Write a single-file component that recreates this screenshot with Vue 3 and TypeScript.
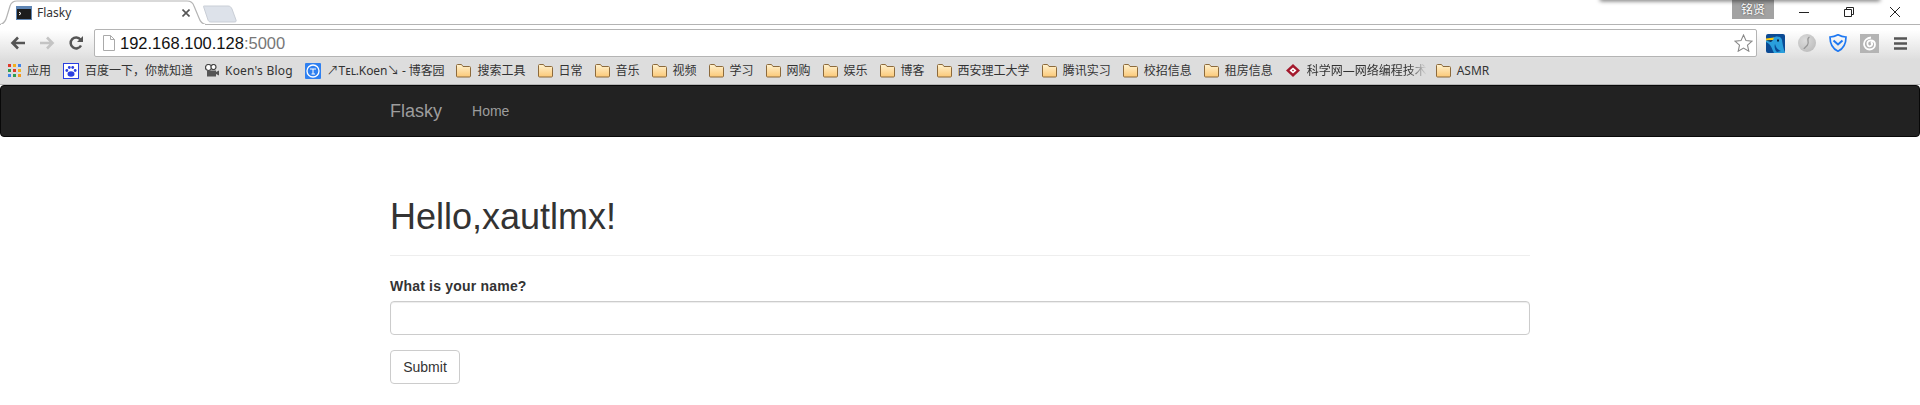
<script setup lang="ts">
const folders = ['搜索工具','日常','音乐','视频','学习','网购','娱乐','博客','西安理工大学','腾讯实习','校招信息','租房信息']
</script>

<template>
  <div class="page">
    <header class="chrome">
      <div class="strip">
        <div class="tab">
          <svg class="tab-shape" width="206" height="25" viewBox="0 0 206 25">
            <path d="M0 24.500C4 24 6 20 7 16L10 6C11 3 13 1 17 1H187C191 1 193 3 194 6L199 18C200 21 202 24 206 24.500Z" fill="#fff" stroke="#b4b4b4" stroke-width="1.200"/>
            <path d="M1 25H205" stroke="#fff" stroke-width="2"/>
          </svg>
          <svg class="favicon" width="16" height="14" viewBox="0 0 16 14">
            <rect width="16" height="14" fill="#5f86b5"/>
            <rect x="1" y="3" width="14" height="10" fill="#1c1c1c"/>
            <path d="M3 6l2 1.500-2 1.500" stroke="#fff" fill="none"/>
          </svg>
          <span class="tab-title">Flasky</span>
          <svg class="tab-close" width="8" height="8" viewBox="0 0 8 8"><path d="M.5.5l7 7M7.500.5l-7 7" stroke="#555" stroke-width="1.600"/></svg>
        </div>
        <svg class="newtab" width="34" height="18" viewBox="0 0 34 18">
          <path d="M1 1H25C27 1 28 2 29 4L33 15C33.500 16.500 33 17 31 17H8C6 17 5.500 16 5 15L1 3C.6 1.500 0 1 1 1Z" fill="#dde2ea" stroke="#c9ced6"/>
        </svg>
        <div class="controls">
          <span class="user">铭贤</span>
          <svg class="ctl ctl-min" width="10" height="10" viewBox="0 0 10 10"><path d="M0 5.500H10" stroke="#222"/></svg>
          <svg class="ctl ctl-max" width="10" height="10" viewBox="0 0 10 10"><path d="M.5 2.500h7v7h-7zM2.500 2.500v-2h7v7h-2" fill="none" stroke="#222"/></svg>
          <svg class="ctl ctl-close" width="10" height="10" viewBox="0 0 10 10"><path d="M0 0l10 10M10 0L0 10" stroke="#222"/></svg>
        </div>
      </div>

      <div class="toolbar">
        <svg class="nav" width="16" height="14" viewBox="0 0 16 14"><path d="M15 7H3M8 1.500L2.500 7 8 12.500" fill="none" stroke="#555" stroke-width="2.600"/></svg>
        <svg class="nav" width="16" height="14" viewBox="0 0 16 14"><path d="M1 7h12M8 1.500L13.500 7 8 12.500" fill="none" stroke="#c4c4c4" stroke-width="2.600"/></svg>
        <svg class="nav" width="16" height="16" viewBox="0 0 16 16"><path d="M13 10.500A5.500 5.500 0 1 1 12.500 4.500" fill="none" stroke="#555" stroke-width="2.500"/><path d="M15 1v6H9z" fill="#555"/></svg>
        <div class="omnibox">
          <svg width="12" height="16" viewBox="0 0 12 16"><path d="M.5.5h7l4 4v11H.5z M7.500.5v4h4" fill="#fff" stroke="#aaa"/></svg>
          <span class="url">192.168.100.128<span class="port">:5000</span></span>
          <svg class="star" width="19" height="18" viewBox="0 0 19 18"><path d="M9.500 1l2.500 5.600 6 .6-4.500 4 1.300 6-5.300-3.100-5.300 3.100 1.300-6L1 7.200l6-.6z" fill="#fff" stroke="#888" stroke-width="1.100"/></svg>
        </div>
        <div class="exts">
          <svg width="19" height="19" viewBox="0 0 19 19"><rect width="19" height="19" rx="2" fill="#0b4a94"/><path d="M0 6l7-2c3-2.500 8-2 9 2 .5 3 1 7 3 13H8C6 15 5 10 0 8z" fill="#2a9fdc"/><path d="M0 4.500L8 3.500 7 6 0 6.500z" fill="#f6c915"/><path d="M0 6.500L7 6 5 8z" fill="#0a2a55"/><rect x="11" y="5.500" width="2" height="2" fill="#06233f"/><path d="M9 10c1 4 3 6 6 7l-4 1C9 16 8 13 9 10z" fill="#0b4a94"/></svg>
          <svg width="18" height="18" viewBox="0 0 18 18"><defs><radialGradient id="orb" cx=".4" cy=".35" r=".7"><stop offset="0" stop-color="#dcdcdc"/><stop offset="1" stop-color="#bdbdbd"/></radialGradient></defs><circle cx="9" cy="9" r="9" fill="url(#orb)"/><path d="M11.500 3C7.500 5 12 8 9.500 11 8 13 6 14 6 15" stroke="#979797" stroke-width="1.300" fill="none"/></svg>
          <svg width="18" height="18" viewBox="0 0 18 18"><path d="M9 .8C6 2.500 4 3 1 3c0 7 2 11.500 8 14.200C15 14.500 17 10 17 3c-3 0-5-.5-8-2.200z" fill="none" stroke="#1e78f2" stroke-width="1.700"/><path d="M4.500 6.500l4.500 4 4.500-4" fill="none" stroke="#1e78f2" stroke-width="2"/></svg>
          <svg width="19" height="19" viewBox="0 0 19 19"><rect width="19" height="19" fill="#b4b4b4"/><path d="M11 3.500C7 4 4 6.500 4 10c0 3 2.500 5.500 5.500 5.500S15 13.500 15 10.500 13 6.500 10.500 6.500 7 8.500 7.500 10.500 10 13 11.500 11.500 12 9 11 8" fill="none" stroke="#fff" stroke-width="1.800"/></svg>
          <svg class="menu" width="13" height="13" viewBox="0 0 13 13"><path d="M0 1.500h13M0 6.500h13M0 11.500h13" stroke="#555" stroke-width="2.600"/></svg>
        </div>
      </div>

      <div class="bookmarks">
        <span class="mark">
          <svg class="ico" width="13" height="13" viewBox="0 0 13 13">
            <rect x="0" y="0" width="3" height="3" fill="#e0392b"/><rect x="5" y="0" width="3" height="3" fill="#f2b01e"/><rect x="10" y="0" width="3" height="3" fill="#3f83ea"/>
            <rect x="0" y="5" width="3" height="3" fill="#2e9e4f"/><rect x="5" y="5" width="3" height="3" fill="#e0392b"/><rect x="10" y="5" width="3" height="3" fill="#f2b01e"/>
            <rect x="0" y="10" width="3" height="3" fill="#3f83ea"/><rect x="5" y="10" width="3" height="3" fill="#2e9e4f"/><rect x="10" y="10" width="3" height="3" fill="#f29a1e"/>
          </svg>
          应用
        </span>
        <span class="mark">
          <svg class="ico" width="16" height="16" viewBox="0 0 16 16"><rect x=".5" y=".5" width="15" height="15" fill="#fff" stroke="#2b3fe0"/><ellipse cx="8" cy="11" rx="3.500" ry="2.800" fill="#2b3fe0"/><circle cx="3.800" cy="7.500" r="1.400" fill="#2b3fe0"/><circle cx="12.200" cy="7.500" r="1.400" fill="#2b3fe0"/><circle cx="6.300" cy="4.500" r="1.400" fill="#2b3fe0"/><circle cx="9.700" cy="4.500" r="1.400" fill="#2b3fe0"/></svg>
          百度一下，你就知道
        </span>
        <span class="mark wide">
          <svg class="ico" width="14" height="14" viewBox="0 0 14 14"><circle cx="3.500" cy="3.500" r="3" fill="#fff" stroke="#444" stroke-width="1.200"/><circle cx="8.500" cy="3" r="2.500" fill="#fff" stroke="#444" stroke-width="1.200"/><rect x="2" y="6.500" width="9" height="6" fill="#555"/><path d="M11 8l3-1.500v5L11 10z" fill="#555"/></svg>
          Koen's Blog
        </span>
        <span class="mark narrow">
          <svg class="ico" width="16" height="16" viewBox="0 0 16 16"><rect width="16" height="16" rx="1" fill="#2f80f0"/><circle cx="8" cy="8" r="6" fill="none" stroke="#fff" stroke-width="1.300"/><path d="M5 6h6M8 6v5M6.500 11H10" stroke="#fff" fill="none"/></svg>
          ↗Tᴇʟ.Koen↘ - 博客园
        </span>
        <span v-for="name in folders" :key="name" class="mark">
          <svg class="ico" width="15" height="14" viewBox="0 0 15 14"><use href="#folder-shape"/></svg>
          {{ name }}
        </span>
        <span class="mark">
          <svg class="ico" width="16" height="16" viewBox="0 0 16 16"><path d="M8 1l7 6.500-7 6.500-7-6.500z" fill="#a3182c"/><path d="M8 4.500l3.500 3-3.500 3-3.500-3z" fill="#fff"/><path d="M8 6.500L9 7.500 8 8.500 7 7.500z" fill="#a3182c"/></svg>
          <span class="fade">科学网—网络编程技术</span>
        </span>
        <span class="mark">
          <svg class="ico" width="15" height="14" viewBox="0 0 15 14"><use href="#folder-shape"/></svg>
          ASMR
        </span>
        <svg class="defs" width="0" height="0">
          <defs>
            <linearGradient id="folder-fill" x1="0" y1="0" x2="0" y2="1"><stop offset="0" stop-color="#fff2cf"/><stop offset="1" stop-color="#fbc877"/></linearGradient>
            <path id="folder-shape" d="M1.500.5h4l1.500 2h6.500c.6 0 1 .4 1 1v8.500c0 .6-.4 1-1 1h-12c-.6 0-1-.4-1-1v-10.500c0-.6.4-1 1-1z" fill="url(#folder-fill)" stroke="#8c6a3c"/>
          </defs>
        </svg>
      </div>
    </header>

    <nav class="navbar">
      <div class="nav-inner">
        <a class="brand">Flasky</a>
        <a class="nav-link">Home</a>
      </div>
    </nav>

    <main class="container">
      <div class="page-header"><h1>Hello,xautlmx!</h1></div>
      <form @submit.prevent>
        <div class="form-group">
          <label for="name">What is your name?</label>
          <input id="name" type="text" />
        </div>
        <button type="submit">Submit</button>
      </form>
    </main>
  </div>
</template>

<style>
html, body { margin: 0; background: #fff; overflow: hidden; }
</style>

<style scoped>
.page { width: 1920px; height: 405px; font-family: "Liberation Sans", Arial, sans-serif; color: #333; overflow: hidden; position: relative; }
.chrome { font-family: "Noto Sans", "Noto Sans CJK SC", sans-serif; background: linear-gradient(#fff 0, #fff 30px, #ddd 60px); }

.strip { height: 25px; display: flex; align-items: flex-start; position: relative; box-sizing: border-box; border-bottom: 1px solid #b4b4b4; background: #fff; }
.strip::before { content: ""; position: absolute; left: 1600px; width: 280px; top: -4px; height: 4px; box-shadow: 0 1px 4px rgba(0,0,0,.6); }
.tab { position: relative; width: 205px; height: 25px; display: flex; align-items: center; flex: none; }
.tab-shape { position: absolute; left: 0; top: 0; }
.favicon { position: relative; margin: 0 0 0 16px; }
.tab-title { position: relative; font-size: 12px; color: #333; margin-left: 5px; }
.tab-close { position: relative; margin-left: auto; margin-right: 15px; }
.newtab { margin: 5px 0 0 -2px; }
.controls { margin-left: auto; display: flex; align-items: flex-start; height: 24px; }
.user { width: 42px; height: 19px; background: #a2a2a2; color: #fff; font-size: 12px; line-height: 19px; text-align: center; text-shadow: 0 0 2px #444; }
.ctl { margin-top: 7px; }
.ctl-min { margin-left: 25px; }
.ctl-max { margin-left: 35px; }
.ctl-close { margin-left: 36px; margin-right: 20px; }

.toolbar { height: 32px; display: flex; align-items: center; box-sizing: border-box; padding-top: 4px; }
.nav { margin-left: 13px; flex: none; }
.nav:first-child { margin-left: 10px; }
.omnibox { margin-left: 10px; width: 1663px; height: 28px; box-sizing: border-box; flex: none; border: 1px solid #b4b4b4; border-radius: 2px; background: #fff; display: flex; align-items: center; padding-left: 8px; }
.url { font-family: "Liberation Sans", Arial, sans-serif; font-size: 16.5px; color: #111; margin-left: 5px; }
.port { color: #777; }
.star { margin-left: auto; margin-right: 3px; }
.exts { display: flex; align-items: center; margin-left: 9px; gap: 13px; }
.menu { margin-left: 2px; }

.bookmarks { height: 28px; display: flex; align-items: center; padding-left: 8px; gap: 12px; font-size: 12px; color: #333; white-space: nowrap; box-sizing: border-box; border-bottom: 1px solid #b4b4b4; }
.mark { display: inline-flex; align-items: center; gap: 6px; line-height: 16px; }
.wide { letter-spacing: .2px; }
.narrow { letter-spacing: -.12px; }
.fade { margin-right: -3px; -webkit-mask-image: linear-gradient(90deg, #000 85%, transparent); mask-image: linear-gradient(90deg, #000 85%, transparent); }
.ico { flex: none; }
.defs { position: absolute; }

.navbar { height: 52px; box-sizing: border-box; background: #222; border: 1px solid #080808; border-radius: 4px; }
.nav-inner { width: 1140px; margin: 0 auto; display: flex; height: 50px; align-items: center; }
.brand { font-size: 18px; color: #9d9d9d; }
.nav-link { font-size: 14px; color: #9d9d9d; margin-left: 30px; }

.container { width: 1140px; margin: 0 auto; padding-top: 60px; }
.page-header { padding-bottom: 9px; margin-bottom: 20px; border-bottom: 1px solid #eee; }
h1 { font-size: 36px; font-weight: 500; line-height: 39px; margin: 0 0 10px; color: #333; }
.form-group { margin-bottom: 15px; }
label { display: block; font-size: 14px; line-height: 20px; font-weight: 700; margin-bottom: 5px; letter-spacing: .2px; }
input { display: block; width: 100%; height: 34px; box-sizing: border-box; border: 1px solid #ccc; border-radius: 4px; padding: 6px 12px; background: #fff; box-shadow: inset 0 1px 1px rgba(0,0,0,.075); outline: none; }
button { display: block; height: 34px; width: 70px; padding: 0; border: 1px solid #ccc; border-radius: 4px; background: #fff; font: 14px "Liberation Sans", Arial, sans-serif; color: #333; }
</style>
